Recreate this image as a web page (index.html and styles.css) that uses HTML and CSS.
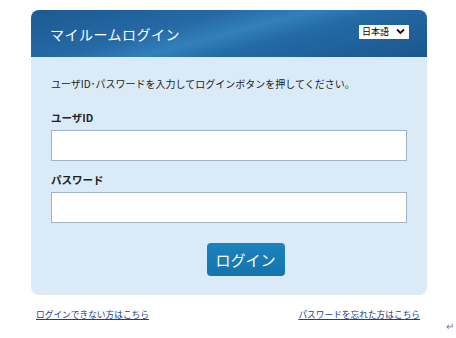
FILE: index.html
```html
<!DOCTYPE html>
<html>
  <head>
    <meta http-equiv="Content-Type" content="text/html; charset=utf-8" />
    <title>マイルームログイン</title>
    <link rel="stylesheet" href="styles.css">
  </head>

  <body>
    <div class="warp">
      <div class="box">
        <div class="head">
          <h1>マイルームログイン</h1>
          <div class="lang">
            <span class="lang-text">日本語</span>
            <svg class="lang-arrow" width="9" height="7" viewBox="0 0 9 7"><path d="M1 1.5 L4.5 5 L8 1.5" fill="none" stroke="#111" stroke-width="1.8"/></svg>
          </div>
        </div>
        <div class="body">
          <p class="note">ユーザID･パスワードを入力してログインボタンを押してください。</p>
          <label class="label">ユーザID</label>
          <input type="text" class="field" />
          <label class="label">パスワード</label>
          <input type="password" class="field" />
          <div class="btn-row">
            <button class="btn">ログイン</button>
          </div>
        </div>
      </div>
      <div class="links">
        <a href="#">ログインできない方はこちら</a>
        <a href="#">パスワードを忘れた方はこちら</a>
      </div>
      <span class="ret">↵</span>
    </div>
  </body>
</html>
```

FILE: styles.css
```css
* {
  margin: 0;
  padding: 0;
  box-sizing: border-box;
}
body {
  font-family: "Noto Sans CJK JP", "Liberation Sans", sans-serif;
  background: #fff;
  color: #222;
}
.warp {
  width: 456px;
  height: 338px;
  padding: 10px 0 0 31px;
  position: relative;
}
.box {
  width: 396px;
  height: 285px;
  background: #daeaf6;
  border-radius: 8px;
  overflow: hidden;
}
.head {
  height: 47px;
  background: linear-gradient(165deg, #1c5a92 0%, #2569a5 35%, #3280bb 50%, #236aa6 62%, #1b568d 100%);
  display: flex;
  align-items: center;
  justify-content: space-between;
  padding: 0 18px 0 19px;
}
.head h1 {
  font-weight: normal;
  font-size: 14px;
  color: #fff;
  letter-spacing: 0.5px;
}
.lang {
  width: 50px;
  height: 14px;
  display: flex;
  align-items: center;
  padding: 0 4px 0 3px;
  background: #fff;
  color: #000;
  margin-top: -4px;
}
.lang-text {
  font-size: 9px;
  line-height: 14px;
  white-space: nowrap;
}
.lang-arrow {
  flex-shrink: 0;
  margin-left: auto;
}
.body {
  padding: 19px 20px 0 20px;
}
.note {
  font-size: 10px;
  line-height: 16px;
  color: #222;
  margin-bottom: 19px;
}
.label {
  display: block;
  font-size: 10.5px;
  font-weight: bold;
  line-height: 14px;
  margin-bottom: 5px;
}
.field {
  display: block;
  width: 356px;
  height: 31px;
  border: 1px solid #9fb4c8;
  background: #fff;
  margin-bottom: 12px;
}
.btn-row {
  display: flex;
  justify-content: center;
  padding-top: 8px;
}
.btn {
  width: 78px;
  height: 33px;
  background: linear-gradient(#1c83bd, #1474ab);
  color: #fff;
  border: none;
  border-radius: 4px;
  font: 15px "Noto Sans CJK JP", sans-serif;
  margin-left: 33px;
}
.links {
  width: 384px;
  display: flex;
  justify-content: space-between;
  margin: 13px 0 0 5px;
}
.links a {
  font-size: 8.7px;
  color: #1c3e8e;
}
.ret {
  position: absolute;
  left: 446px;
  top: 318px;
  font-size: 10px;
  color: #777;
}
```
